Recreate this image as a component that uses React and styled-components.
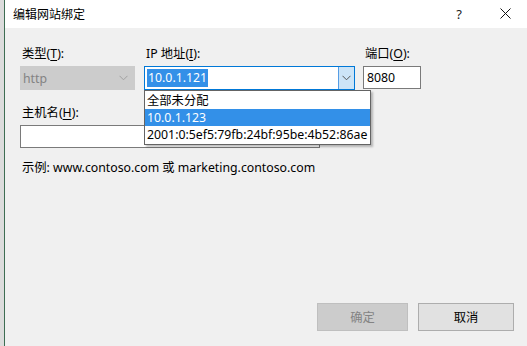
import React from "react";
import styled, { createGlobalStyle } from "styled-components";

const Global = createGlobalStyle`
  html, body {
    margin: 0;
    padding: 0;
    width: 527px;
    height: 346px;
    overflow: hidden;
    background: #e4e4e4;
  }
  #root {
    height: 100%;
  }
`;

const Screen = styled.div`
  display: flex;
  height: 346px;
  font-family: "Noto Sans", "Noto Sans CJK SC", sans-serif;
  font-size: 12.3px;
  color: #000;
`;

const Behind = styled.div`
  width: 4px;
  background: #dcdcdc;
  border-right: 1px solid #3d6d52;
`;

const Dialog = styled.div`
  flex: 1;
  display: flex;
  flex-direction: column;
  background: #f0f0f0;
`;

const TitleBar = styled.div`
  height: 28px;
  background: #fff;
  display: flex;
  align-items: center;
  padding-left: 8px;
  padding-right: 10px;
`;

const Title = styled.div`
  flex: 1;
  font-size: 12px;
`;

const TitleButton = styled.div`
  width: ${(p) => p.$w}px;
  text-align: center;
  font-size: ${(p) => p.$size}px;
  color: #222;
`;

const Body = styled.div`
  flex: 1;
  display: flex;
  flex-direction: column;
  padding: 18px 13px 15px 15px;
`;

const Row = styled.div`
  display: flex;
  gap: ${(p) => p.$gap || 0}px;
  margin-top: ${(p) => p.$top || 0}px;
`;

const Field = styled.div`
  position: relative;
  display: flex;
  flex-direction: column;
  width: ${(p) => p.$w}px;
`;

const Label = styled.div`
  height: 16px;
  line-height: 16px;
  margin-left: 2px;
  margin-bottom: 4px;
  white-space: nowrap;
  u {
    text-decoration: underline;
    text-underline-offset: 2px;
  }
`;

const Select = styled.div`
  height: 24px;
  box-sizing: border-box;
  display: flex;
  align-items: stretch;
  border: 1px solid ${(p) => (p.$active ? "#0078d7" : "#cccccc")};
  background: ${(p) => (p.$active ? "#fff" : "#cccccc")};
  color: ${(p) => (p.$active ? "#000" : "#838383")};
`;

const SelectText = styled.div`
  flex: 1;
  display: flex;
  align-items: center;
  padding-left: 2px;
`;

const Selected = styled.span`
  background: #3390e8;
  color: #fff;
  padding: 1px 1px;
  line-height: 16px;
`;

const Arrow = styled.div`
  width: 15px;
  display: flex;
  align-items: center;
  justify-content: center;
  background: ${(p) => (p.$active ? "#cce4f7" : "transparent")};
  border-left: 1px solid ${(p) => (p.$active ? "#569de5" : "transparent")};
  margin-right: ${(p) => (p.$active ? 0 : 3)}px;
`;

const Input = styled.div`
  height: ${(p) => p.$h || 23}px;
  box-sizing: border-box;
  border: 1px solid #7a7a7a;
  background: #fff;
  display: flex;
  align-items: center;
  padding-left: 3px;
`;

const DropList = styled.div`
  position: absolute;
  top: 44px;
  left: 0;
  width: 227px;
  box-sizing: border-box;
  background: #fff;
  border: 1px solid #646464;
  padding: 1px 0;
  box-shadow: 2px 2px 2px rgba(0, 0, 0, 0.25);
  z-index: 2;
`;

const Option = styled.div`
  height: 17px;
  line-height: 17px;
  padding-left: 2px;
  white-space: nowrap;
  background: ${(p) => (p.$hl ? "#3390e8" : "transparent")};
  color: ${(p) => (p.$hl ? "#fff" : "#000")};
`;

const Hint = styled.div`
  margin-top: 12px;
  margin-left: 2px;
  line-height: 16px;
`;

const Footer = styled.div`
  margin-top: auto;
  display: flex;
  justify-content: flex-end;
  gap: 10px;
`;

const Button = styled.div`
  width: ${(p) => p.$w}px;
  height: 28px;
  box-sizing: border-box;
  display: flex;
  align-items: center;
  justify-content: center;
  border: 1px solid ${(p) => (p.$disabled ? "#bfbfbf" : "#adadad")};
  background: ${(p) => (p.$disabled ? "#cccccc" : "#e1e1e1")};
  color: ${(p) => (p.$disabled ? "#838383" : "#000")};
`;

const Chevron = ({ color }) => (
  <svg width="9" height="6" viewBox="0 0 9 6">
    <path d="M0.5 0.8 L4.5 4.8 L8.5 0.8" fill="none" stroke={color} strokeWidth="1" />
  </svg>
);

export default function App() {
  return (
    <Screen>
      <Global />
      <Behind />
      <Dialog>
        <TitleBar>
          <Title>编辑网站绑定</Title>
          <TitleButton $w={20} $size={13}>?</TitleButton>
          <TitleButton $w={24} $size={11} style={{ marginLeft: 24 }}>
            <svg width="11" height="11" viewBox="0 0 11 11">
              <path d="M0.5 0.5 L10.5 10.5 M10.5 0.5 L0.5 10.5" stroke="#111" strokeWidth="1" />
            </svg>
          </TitleButton>
        </TitleBar>
        <Body>
          <Row $gap={9}>
            <Field $w={115}>
              <Label>类型(<u>T</u>):</Label>
              <Select>
                <SelectText>http</SelectText>
                <Arrow>
                  <Chevron color="#a0a0a0" />
                </Arrow>
              </Select>
            </Field>
            <Field $w={211}>
              <Label>IP 地址(<u>I</u>):</Label>
              <Select $active>
                <SelectText>
                  <Selected>10.0.1.121</Selected>
                </SelectText>
                <Arrow $active>
                  <Chevron color="#555" />
                </Arrow>
              </Select>
              <DropList>
                <Option>全部未分配</Option>
                <Option $hl>10.0.1.123</Option>
                <Option>2001:0:5ef5:79fb:24bf:95be:4b52:86ae</Option>
              </DropList>
            </Field>
            <Field $w={58} style={{ marginLeft: -1 }}>
              <Label>端口(<u>O</u>):</Label>
              <Input $h={23}>8080</Input>
            </Field>
          </Row>
          <Row $top={15}>
            <Field $w={300}>
              <Label>主机名(<u>H</u>):</Label>
              <Input />
            </Field>
          </Row>
          <Hint>示例: www.contoso.com 或 marketing.contoso.com</Hint>
          <Footer>
            <Button $w={91} $disabled>确定</Button>
            <Button $w={96}>取消</Button>
          </Footer>
        </Body>
      </Dialog>
    </Screen>
  );
}
